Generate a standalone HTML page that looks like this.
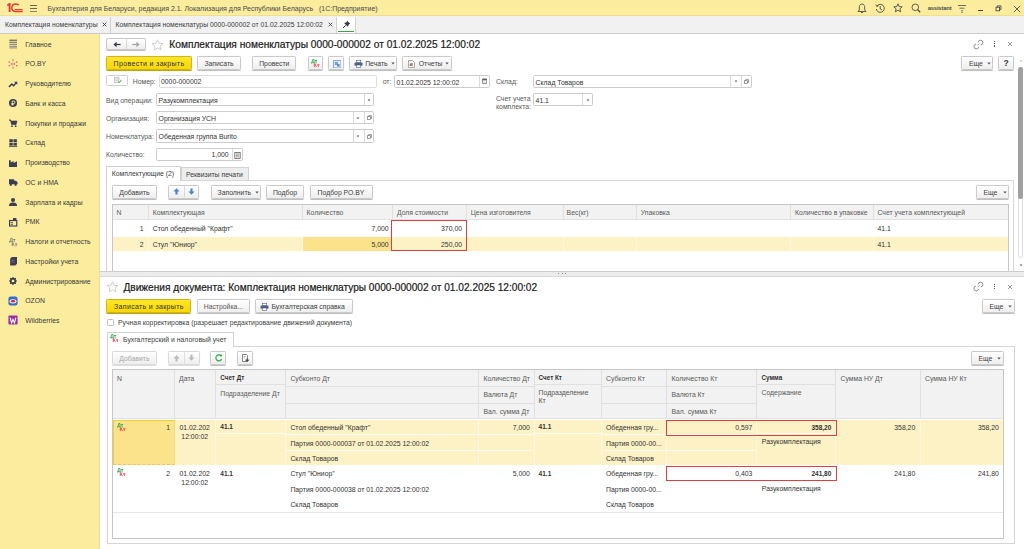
<!DOCTYPE html>
<html><head><meta charset="utf-8"><style>
*{box-sizing:border-box;margin:0;padding:0}
html,body{width:1024px;height:549px;overflow:hidden;background:#fff;font-family:"Liberation Sans",sans-serif;font-size:6.85px;color:#404040}
.a{position:absolute}
.t{position:absolute;white-space:nowrap;line-height:9px}
.mi{position:absolute;left:25.3px;white-space:nowrap;color:#3a3a3a;line-height:9px}
.btn{position:absolute;background:linear-gradient(#FFFFFF,#EEEEEE);border:1px solid #CACACA;border-radius:1.5px;box-shadow:0 0.7px 0.7px #BDBDBD;color:#404040;text-align:center;line-height:11px;white-space:nowrap}
.ybtn{position:absolute;background:linear-gradient(#FFE628,#F8D800);border:1px solid #CDB22A;border-radius:1.5px;box-shadow:0 0.7px 0.7px #B9A000;color:#30303e;font-size:7px;letter-spacing:0.34px;text-align:center;line-height:11px;white-space:nowrap}
.inp{position:absolute;background:#fff;border:1px solid #CCCCCC;border-radius:1.5px;padding-left:3px;color:#333;white-space:nowrap}
.lbl{position:absolute;color:#595959;white-space:nowrap;line-height:9px}
.sep{position:absolute;top:0;bottom:0;width:1px;background:#DADADA}
.red{position:absolute;border:1.4px solid #E33C40}
</style></head>
<body>
<div class="a" style="left:0px;top:0px;width:1024.00px;height:16.00px;background:#FBEC9E;border-bottom:1px solid #EEDF95"></div>
<svg class="a" style="left:7px;top:3px" width="17" height="10" viewBox="0 0 17 10">
 <path d="M0.3 2.6 L2.6 0.9 L2.6 9" stroke="#E53935" stroke-width="1.9" fill="none"/>
 <path d="M11.8 2.3 C10.5 0.5 5.8 0.3 5 3.6 C4.3 6.3 5.6 8.5 8.6 8.5 L15.6 8.5" stroke="#E53935" stroke-width="1.5" fill="none"/>
 <path d="M7.6 6.6 L15.6 6.6" stroke="#E53935" stroke-width="1.1" fill="none"/>
</svg>
<div class="a" style="left:30px;top:5px;width:7.00px;height:1.00px;background:#6b6553;"></div>
<div class="a" style="left:30px;top:8px;width:7.00px;height:1.00px;background:#6b6553;"></div>
<div class="a" style="left:30px;top:10.5px;width:7.00px;height:1.00px;background:#8a8468;"></div>
<div class="t" style="left:47.5px;top:3.5px;color:#4a4a4a;font-size:7px">Бухгалтерия для Беларуси, редакция 2.1. Локализация для Республики Беларусь&nbsp;&nbsp;&nbsp;(1С:Предприятие)</div>
<svg class="a" style="left:857px;top:3px" width="10" height="11" viewBox="0 0 10 11"><path d="M5 1 C2.8 1 2.3 3 2.3 5 L2.3 7 L1 8.5 L9 8.5 L7.7 7 L7.7 5 C7.7 3 7.2 1 5 1 Z M4 9.5 L6 9.5" stroke="#444" stroke-width="0.85" fill="none"/></svg>
<svg class="a" style="left:875px;top:3px" width="10" height="11" viewBox="0 0 10 11"><path d="M2 3 A4 4 0 1 1 1.3 6" stroke="#444" stroke-width="0.85" fill="none"/><path d="M0.8 1.5 L1.8 3.5 L3.6 2.6" stroke="#444" stroke-width="0.85" fill="none"/><path d="M5.2 3 L5.2 6 L7 7" stroke="#444" stroke-width="0.85" fill="none"/></svg>
<svg class="a" style="left:893px;top:3px" width="10" height="10" viewBox="0 0 10 10"><path d="M5 0.8 L6.2 3.6 L9.2 3.8 L6.9 5.8 L7.6 8.8 L5 7.2 L2.4 8.8 L3.1 5.8 L0.8 3.8 L3.8 3.6 Z" stroke="#444" stroke-width="0.85" fill="none" stroke-linejoin="round"/></svg>
<svg class="a" style="left:911px;top:3px" width="10" height="10" viewBox="0 0 10 10"><circle cx="4.3" cy="4.3" r="3.3" stroke="#444" stroke-width="0.85" fill="none"/><path d="M6.6 6.6 L9.2 9.2" stroke="#444" stroke-width="1.3"/></svg>
<div class="t" style="left:927.7px;top:3.5px;color:#4a4a4a;font-size:5.8px;font-weight:bold;letter-spacing:-0.15px">assistant</div>
<svg class="a" style="left:957px;top:3px" width="10" height="11" viewBox="0 0 10 11"><path d="M1 2.5 L9 2.5 M2.5 5.2 L7.5 5.2 M4 7.8 L6 7.8" stroke="#555" stroke-width="0.85"/><path d="M4.5 9.5 L5.5 9.5" stroke="#555" stroke-width="1"/></svg>
<div class="a" style="left:977.5px;top:9.8px;width:5.50px;height:1.00px;background:#444;"></div>
<svg class="a" style="left:995px;top:5px" width="7" height="7" viewBox="0 0 7 7"><rect x="1" y="2.2" width="3.6" height="3.6" stroke="#444" stroke-width="0.85" fill="none"/><path d="M2.4 2.2 L2.4 0.9 L6 0.9 L6 4.4 L4.6 4.4" stroke="#444" stroke-width="0.85" fill="none"/></svg>
<svg class="a" style="left:1012.5px;top:4.5px" width="8" height="8" viewBox="0 0 8 8"><path d="M0.8 0.8 L7.2 7.2 M7.2 0.8 L0.8 7.2" stroke="#444" stroke-width="0.85"/></svg>
<div class="a" style="left:0px;top:16px;width:1024.00px;height:17.50px;background:#F1F1F1;border-bottom:1px solid #CACACA"></div>
<div class="t" style="left:5px;top:20.1px;color:#404040;font-size:6.8px">Комплектация номенклатуры</div>
<svg class="a" style="left:101.5px;top:22.3px" width="5" height="5" viewBox="0 0 5 5"><path d="M0.7 0.7 L4.3 4.3 M4.3 0.7 L0.7 4.3" stroke="#444" stroke-width="0.95"/></svg>
<div class="a" style="left:110px;top:17px;width:1.00px;height:16.00px;background:#D2D2D2;"></div>
<div class="t" style="left:115.5px;top:20.1px;color:#404040;font-size:6.8px">Комплектация номенклатуры 0000-000002 от 01.02.2025 12:00:02</div>
<svg class="a" style="left:327.5px;top:22.3px" width="5" height="5" viewBox="0 0 5 5"><path d="M0.7 0.7 L4.3 4.3 M4.3 0.7 L0.7 4.3" stroke="#444" stroke-width="0.95"/></svg>
<div class="a" style="left:335.5px;top:16.5px;width:20.00px;height:16.50px;background:#fff;border-left:1px solid #D2D2D2;border-right:1px solid #D2D2D2"></div>
<svg class="a" style="left:341.5px;top:19.5px" width="9" height="9" viewBox="0 0 9 9"><path d="M5.2 0.8 L8.2 3.8 L7 4.3 L5.8 6.8 L2.2 3.2 L4.7 2 Z" fill="#3a3a4a"/><path d="M3.6 5.4 L1 8" stroke="#3a3a4a" stroke-width="1"/></svg>
<div class="a" style="left:338px;top:31px;width:16.00px;height:1.20px;background:#3BA546;"></div>
<div class="a" style="left:0px;top:33.5px;width:100.00px;height:515.50px;background:#FBEC9E;"></div>
<div class="a" style="left:99px;top:33.5px;width:1.00px;height:515.50px;background:#E9DDA0;"></div>
<svg class="a" style="left:8.9px;top:40.2px;overflow:visible" width="8" height="8" viewBox="0 0 7 7"><path d="M0.3 0.2H7" stroke="#3d3d5a" stroke-width="0.8"/><path d="M0.3 2H7" stroke="#55556a" stroke-width="0.8"/><path d="M0.3 3.8H7" stroke="#6a6a75" stroke-width="0.8"/><path d="M0.3 5.5H7" stroke="#777780" stroke-width="0.8"/><path d="M0.3 6.9H7" stroke="#808085" stroke-width="0.8"/></svg>
<div class="mi" style="top:39.7px">Главное</div>
<svg class="a" style="left:8.9px;top:59.9px;overflow:visible" width="8" height="8" viewBox="0 0 7 7"><g fill="#D84848"><circle cx="3.5" cy="0" r="0.6"/><circle cx="0.2" cy="1.8" r="0.6"/><circle cx="6.8" cy="1.8" r="0.6"/><circle cx="0.2" cy="5" r="0.6"/><circle cx="6.8" cy="5" r="0.6"/><circle cx="3.5" cy="7" r="0.6"/><circle cx="2.2" cy="3.5" r="0.55"/><circle cx="4.8" cy="3.5" r="0.55"/></g><path d="M1 2.5L6 4.5M6 2.5L1 4.5M3.5 0.8V6.2" stroke="#C89090" stroke-width="0.4"/></svg>
<div class="mi" style="top:59.4px">РО.BY</div>
<svg class="a" style="left:8.9px;top:79.7px;overflow:visible" width="8" height="8" viewBox="0 0 7 7"><path d="M0 6L2.5 3.5L4 5L6.8 2" stroke="#3d3d55" stroke-width="1.3" fill="none"/><path d="M4.5 1.5H7.2V4.2Z" fill="#3d3d55"/></svg>
<div class="mi" style="top:79.2px">Руководителю</div>
<svg class="a" style="left:8.9px;top:99.4px;overflow:visible" width="8" height="8" viewBox="0 0 7 7"><circle cx="3.5" cy="3.5" r="3.5" fill="#3d3d55"/><path d="M2.8 5.8V1.8H4.2A1.1 1.1 0 0 1 4.2 4H2.2M2.2 4.9H4.2" stroke="#FBEC9E" stroke-width="0.8" fill="none"/></svg>
<div class="mi" style="top:98.9px">Банк и касса</div>
<svg class="a" style="left:8.9px;top:119.1px;overflow:visible" width="8" height="8" viewBox="0 0 7 7"><path d="M0 0.8H1.4L2.2 4.8H6.2L7 1.8H1.7Z" fill="#3d3d55" stroke="#3d3d55" stroke-width="0.6"/><circle cx="2.6" cy="6.3" r="0.8" fill="#3d3d55"/><circle cx="5.8" cy="6.3" r="0.8" fill="#3d3d55"/></svg>
<div class="mi" style="top:118.6px">Покупки и продажи</div>
<svg class="a" style="left:8.9px;top:138.9px;overflow:visible" width="8" height="8" viewBox="0 0 7 7"><rect x="0.3" y="0.2" width="3" height="2.5" fill="#3d3d55"/><rect x="3.9" y="0.2" width="3" height="2.5" fill="#3d3d55"/><rect x="0.3" y="3.3" width="3" height="2.5" fill="#3d3d55"/><rect x="3.9" y="3.3" width="3" height="2.5" fill="#3d3d55"/><path d="M0 6.6H7.2" stroke="#3d3d55" stroke-width="0.7"/></svg>
<div class="mi" style="top:138.4px">Склад</div>
<svg class="a" style="left:8.9px;top:158.6px;overflow:visible" width="8" height="8" viewBox="0 0 7 7"><path d="M0 7V1H1.5V3L4 1.8V3.5L7 2V7Z" fill="#3d3d55"/></svg>
<div class="mi" style="top:158.1px">Производство</div>
<svg class="a" style="left:8.9px;top:178.3px;overflow:visible" width="8" height="8" viewBox="0 0 7 7"><path d="M0 1H4.5V5.5H0Z M4.5 2.5H6.2L7.5 4V5.5H4.5Z" fill="#3d3d55"/><circle cx="1.6" cy="6" r="1" fill="#3d3d55"/><circle cx="5.8" cy="6" r="1" fill="#3d3d55"/></svg>
<div class="mi" style="top:177.8px">ОС и НМА</div>
<svg class="a" style="left:8.9px;top:198.0px;overflow:visible" width="8" height="8" viewBox="0 0 7 7"><circle cx="3.5" cy="1.8" r="1.8" fill="#3d3d55"/><path d="M0 7C0 4.5 1.5 4 3.5 4S7 4.5 7 7Z" fill="#3d3d55"/></svg>
<div class="mi" style="top:197.5px">Зарплата и кадры</div>
<svg class="a" style="left:8.9px;top:217.8px;overflow:visible" width="8" height="8" viewBox="0 0 7 7"><path d="M3.5 0H6.5V2H3.5Z" fill="#3d3d55"/><rect x="0.5" y="2.2" width="6.3" height="4.8" fill="none" stroke="#3d3d55" stroke-width="1"/><path d="M1.5 4H3.5M1.5 5.5H3.5" stroke="#3d3d55" stroke-width="0.7"/></svg>
<div class="mi" style="top:217.3px">РМК</div>
<svg class="a" style="left:8.9px;top:237.5px;overflow:visible" width="8" height="8" viewBox="0 0 7 7"><path d="M0.4 3.2H3.2M0.9 3.2L1.6 0.3H2.8V3.2M0.45 2.9V3.9M3.15 2.9V3.9M3.6 1.3H5.6M4.6 1.3V3.4" stroke="#55556a" stroke-width="0.55" fill="none"/><path d="M2.8 4V7.2M2.8 5.6L4.6 4M3.5 5.1L4.8 7.2M5.2 5.1H7.2M6.2 5.1V7.2" stroke="#55556a" stroke-width="0.55" fill="none"/></svg>
<div class="mi" style="top:237.0px">Налоги и отчетность</div>
<svg class="a" style="left:8.9px;top:257.2px;overflow:visible" width="8" height="8" viewBox="0 0 7 7"><path d="M1 1.5L2.5 0H7V6L5.5 7.5H1Z" fill="#3d3d55"/><path d="M2 3H5M2 4.5H5" stroke="#8888aa" stroke-width="0.5"/></svg>
<div class="mi" style="top:256.7px">Настройки учета</div>
<svg class="a" style="left:8.9px;top:277.0px;overflow:visible" width="8" height="8" viewBox="0 0 7 7"><circle cx="3.5" cy="3.5" r="2.2" fill="none" stroke="#3d3d55" stroke-width="1.2"/><path d="M3.5 0V7M0 3.5H7M1 1L6 6M6 1L1 6" stroke="#3d3d55" stroke-width="1"/><circle cx="3.5" cy="3.5" r="1.1" fill="#FBEC9E"/></svg>
<div class="mi" style="top:276.5px">Администрирование</div>
<svg class="a" style="left:8.9px;top:296.7px;overflow:visible" width="8" height="8" viewBox="0 0 7 7"><rect x="-0.5" y="-0.5" width="8" height="8" rx="2" fill="#2F6FD0"/><ellipse cx="3.5" cy="3.8" rx="3" ry="1.9" fill="#fff"/><ellipse cx="3.5" cy="3.8" rx="2.2" ry="1.1" fill="#E02D3C"/></svg>
<div class="mi" style="top:296.2px">OZON</div>
<svg class="a" style="left:8.9px;top:316.4px;overflow:visible" width="8" height="8" viewBox="0 0 7 7"><rect x="-0.5" y="-0.5" width="8" height="8" rx="1" fill="#9B2AA5"/><path d="M1 1.5L2.2 6L3.5 3L4.8 6L6 1.5" stroke="#fff" stroke-width="1" fill="none"/></svg>
<div class="mi" style="top:315.9px">Wildberries</div>
<div class="btn" style="left:106px;top:38.2px;width:39.5px;height:12.3px;line-height:12.3px;border-radius:2px"></div>
<div class="a" style="left:126px;top:39.2px;width:1.00px;height:10.30px;background:#D8D8D8;"></div>
<svg class="a" style="left:112.5px;top:40.8px" width="8" height="7" viewBox="0 0 8 7"><path d="M7.6 3.5H3" stroke="#3a3a4a" stroke-width="1.3"/><path d="M0.4 3.5L3.6 0.8V6.2Z" fill="#3a3a4a"/></svg>
<svg class="a" style="left:131.8px;top:40.8px" width="8" height="7" viewBox="0 0 8 7"><path d="M0.2 3.5H4.8" stroke="#a5a5a5" stroke-width="1.2"/><path d="M7.6 3.5L4.4 0.8V6.2Z" fill="#a5a5a5"/></svg>
<svg class="a" style="left:151px;top:38.5px" width="13" height="12" viewBox="0 0 13 12"><path d="M6.5 0.8L8.1 4.3L11.9 4.6L9 7.1L9.9 10.9L6.5 8.9L3.1 10.9L4 7.1L1.1 4.6L4.9 4.3Z" stroke="#C8C8C8" stroke-width="0.9" fill="#fff" stroke-linejoin="round"/></svg>
<div class="t" style="left:169.3px;top:39.3px;font-size:10.2px;line-height:12px;color:#1a1a1a;-webkit-text-stroke:0.2px #1a1a1a">Комплектация номенклатуры 0000-000002 от 01.02.2025 12:00:02</div>
<svg class="a" style="left:973px;top:38.5px" width="11" height="11" viewBox="0 0 11 11"><path d="M5.11 3.39A2.4 2.4 0 1 1 7.71 5.99M5.69 7.71A2.4 2.4 0 1 1 3.09 5.11M4.5 6.3L6.3 4.5" stroke="#707070" stroke-width="0.75" fill="none"/></svg>
<div class="a" style="left:993.8px;top:41.0px;width:1.20px;height:1.20px;background:#5a5550;"></div>
<div class="a" style="left:993.8px;top:43.199999999999996px;width:1.20px;height:1.20px;background:#5a5550;"></div>
<div class="a" style="left:993.8px;top:45.4px;width:1.20px;height:1.20px;background:#5a5550;"></div>
<svg class="a" style="left:1007.3px;top:40.8px" width="6" height="6" viewBox="0 0 6 6"><path d="M1 1L5 5M5 1L1 5" stroke="#777" stroke-width="0.75"/></svg>
<div class="ybtn" style="left:106px;top:56.3px;width:86.0px;height:13.3px;line-height:13.3px;">Провести и закрыть</div>
<div class="btn" style="left:197px;top:56.3px;width:44.0px;height:13.3px;line-height:13.3px;">Записать</div>
<div class="btn" style="left:252.3px;top:56.3px;width:44.0px;height:13.3px;line-height:13.3px;">Провести</div>
<div class="btn" style="left:307.5px;top:56.3px;width:15.8px;height:13.3px;line-height:13.3px;"></div>
<svg class="a" style="left:310.6px;top:58.7px" width="10" height="9" viewBox="0 0 10 9"><path d="M0.4 3.7H3.4M1 3.7L1.7 0.5H3V3.7M0.45 3.4V4.5M3.35 3.4V4.5M3.9 1.5H6.1M5 1.5V3.9" stroke="#35A84E" stroke-width="0.85" fill="none"/><path d="M3.3 4.4V8.1M3.3 6.3L5.4 4.4M4.1 5.8L5.6 8.1M6.1 5.8H8.5M7.3 5.8V8.1" stroke="#EA4040" stroke-width="0.85" fill="none"/></svg>
<div class="btn" style="left:328.4px;top:56.3px;width:15.4px;height:13.3px;line-height:13.3px;"><svg style="position:absolute;left:3.3px;top:2.3px" width="8.5" height="8.5" viewBox="0 0 8 8"><rect x="0.5" y="0.5" width="7" height="7" fill="#E8F0FA" stroke="#80A8D8" stroke-width="0.9"/><rect x="2" y="2" width="2.5" height="2.5" fill="#7DA6D8" stroke="#5B8FCC" stroke-width="0.5"/><rect x="3.8" y="3.8" width="2.4" height="2.4" fill="#5B8FCC"/></svg></div>
<div class="btn" style="left:349.2px;top:56.3px;width:48.1px;height:13.3px;line-height:13.3px;"><svg style="position:absolute;left:3.5px;top:2.5px" width="9" height="8" viewBox="0 0 9 8"><rect x="2.3" y="0.6" width="4.4" height="2" fill="#fff" stroke="#4f5f85" stroke-width="0.6"/><rect x="0.5" y="2.6" width="8" height="3.2" rx="0.8" fill="#4f5f85"/><rect x="2.3" y="5" width="4.4" height="2.5" fill="#fff" stroke="#4f5f85" stroke-width="0.6"/></svg><span style="position:absolute;left:15px;top:0">Печать</span><svg width="4" height="3" style="position:absolute;left:41px;top:5px" viewBox="0 0 4 3"><path d="M0.3 0.5H3.7L2 2.4Z" fill="#555"/></svg></div>
<div class="btn" style="left:402.3px;top:56.3px;width:49.3px;height:13.3px;line-height:13.3px;"><svg style="position:absolute;left:4.5px;top:2.5px" width="7" height="8" viewBox="0 0 7 8"><path d="M0.5 0.5H4.5L6.5 2.5V7.5H0.5Z" fill="#fff" stroke="#888" stroke-width="0.7"/><rect x="1.7" y="3.5" width="1.3" height="2.5" fill="#3BA546"/><rect x="3.3" y="3" width="1.3" height="3" fill="#E53935"/></svg><span style="position:absolute;left:15.5px;top:0">Отчеты</span><svg width="4" height="3" style="position:absolute;left:42px;top:5px" viewBox="0 0 4 3"><path d="M0.3 0.5H3.7L2 2.4Z" fill="#555"/></svg></div>
<div class="btn" style="left:961.4px;top:56.3px;width:31.9px;height:13.3px;line-height:13.3px;"><span style="position:absolute;left:6.5px;top:0">Еще</span><svg width="4" height="3" style="position:absolute;left:25px;top:5px" viewBox="0 0 4 3"><path d="M0.3 0.5H3.7L2 2.4Z" fill="#555"/></svg></div>
<div class="btn" style="left:998.3px;top:56.3px;width:15.7px;height:13.3px;line-height:13.3px;"><b style="font-size:8.5px;color:#333">?</b></div>
<div class="a" style="left:1017px;top:56px;width:7.00px;height:215.00px;background:#fff;"></div>
<svg class="a" style="left:1019px;top:59px" width="4" height="3" viewBox="0 0 4 3"><path d="M0.5 2.5H3.5L2 0.8Z" fill="#bbb"/></svg>
<div class="a" style="left:1018.2px;top:66.9px;width:4.60px;height:191.40px;background:#fff;border:0.8px solid #DDDDDD;border-radius:2.3px"></div>
<div class="a" style="left:1018.2px;top:66.9px;width:4.60px;height:132.20px;background:#A0A0A0;border-radius:2.3px"></div>
<svg class="a" style="left:1019px;top:263.5px" width="4" height="3" viewBox="0 0 4 3"><path d="M0.5 0.5H3.5L2 2.2Z" fill="#666"/></svg>
<div class="btn" style="left:106px;top:75.2px;width:21.7px;height:10.4px;line-height:10.4px;background:#fff;box-shadow:none;border-color:#CFCFCF"><svg style="position:absolute;left:7px;top:1.3px" width="8" height="7" viewBox="0 0 8 7"><rect x="0.5" y="0.5" width="4.5" height="5" fill="#F2F2F2" stroke="#A8A8A8" stroke-width="0.6"/><path d="M1.5 2H4M1.5 3.5H4" stroke="#aaa" stroke-width="0.5"/><path d="M4.3 4.3L5.5 5.6L7.5 2.8" stroke="#3BA546" stroke-width="1" fill="none"/></svg></div>
<div class="lbl" style="left:132.8px;top:77.3px">Номер:</div>
<div class="inp" style="border-color:#DDDDDD;left:158.7px;top:75.4px;width:218.0px;height:12.9px;line-height:12.9px;padding-left:1.3px">0000-000002</div>
<div class="lbl" style="left:382.7px;top:77.3px">от:</div>
<div class="inp" style="left:394.3px;top:75.2px;width:96.2px;height:13.2px;line-height:13.2px;padding-left:1.3px">01.02.2025 12:00:02<div class="sep" style="left:84.1px"></div></div>
<svg class="a" style="left:482px;top:78px" width="5.2" height="6" viewBox="0 0 5.2 6"><rect x="0.4" y="0.9" width="4.4" height="4.7" rx="0.6" fill="#E6E6E6" stroke="#707070" stroke-width="0.8"/><rect x="0.4" y="0.9" width="4.4" height="1.3" fill="#5a5a6a"/></svg>
<div class="lbl" style="left:496.1px;top:77.3px">Склад:</div>
<div class="inp" style="left:533.3px;top:75.2px;width:219.2px;height:13.2px;line-height:13.2px;padding-left:1.3px">Склад Товаров<div class="sep" style="left:195.3px"></div><div class="sep" style="left:207.1px"></div></div>
<svg class="a" style="left:733.5px;top:80.3px" width="4" height="3" viewBox="0 0 4 3"><path d="M0.6 0.6H3.4L2 2.2Z" fill="#555"/></svg>
<svg class="a" style="left:744.4px;top:79.2px" width="5.2" height="5.2" viewBox="0 0 6 6"><rect x="0.7" y="2" width="3.3" height="3.3" fill="none" stroke="#666" stroke-width="0.75"/><path d="M2 2V0.7H5.3V4H4" stroke="#666" stroke-width="0.75" fill="none"/></svg>
<div class="lbl" style="left:106px;top:95.5px">Вид операции:</div>
<div class="inp" style="left:156.3px;top:93.1px;width:218.2px;height:13.2px;line-height:13.2px;padding-left:1.3px">Разукомплектация<div class="sep" style="left:206.4px"></div></div>
<svg class="a" style="left:367.1px;top:98.5px" width="4" height="3" viewBox="0 0 4 3"><path d="M0.6 0.6H3.4L2 2.2Z" fill="#555"/></svg>
<div class="lbl" style="left:496px;top:94.5px;line-height:8.8px">Счет учета<br>комплекта:</div>
<div class="inp" style="left:533.3px;top:93.1px;width:60.1px;height:13.2px;line-height:13.2px;padding-left:1.3px">41.1<div class="sep" style="left:47.4px"></div></div>
<svg class="a" style="left:585.5px;top:98.5px" width="4" height="3" viewBox="0 0 4 3"><path d="M0.6 0.6H3.4L2 2.2Z" fill="#555"/></svg>
<div class="lbl" style="left:106px;top:113.5px">Организация:</div>
<div class="inp" style="left:156.3px;top:111.2px;width:218.2px;height:13.2px;line-height:13.2px;padding-left:1.3px">Организация УСН<div class="sep" style="left:195.3px"></div><div class="sep" style="left:206.4px"></div></div>
<svg class="a" style="left:356.1px;top:116.5px" width="4" height="3" viewBox="0 0 4 3"><path d="M0.6 0.6H3.4L2 2.2Z" fill="#555"/></svg>
<svg class="a" style="left:366.5px;top:115.4px" width="5.2" height="5.2" viewBox="0 0 6 6"><rect x="0.7" y="2" width="3.3" height="3.3" fill="none" stroke="#666" stroke-width="0.75"/><path d="M2 2V0.7H5.3V4H4" stroke="#666" stroke-width="0.75" fill="none"/></svg>
<div class="lbl" style="left:106px;top:132.0px">Номенклатура:</div>
<div class="inp" style="left:156.3px;top:129.4px;width:218.2px;height:13.2px;line-height:13.2px;padding-left:1.3px">Обеденная группа Burito<div class="sep" style="left:195.3px"></div><div class="sep" style="left:206.4px"></div></div>
<svg class="a" style="left:356.1px;top:134.9px" width="4" height="3" viewBox="0 0 4 3"><path d="M0.6 0.6H3.4L2 2.2Z" fill="#555"/></svg>
<svg class="a" style="left:366.5px;top:133.8px" width="5.2" height="5.2" viewBox="0 0 6 6"><rect x="0.7" y="2" width="3.3" height="3.3" fill="none" stroke="#666" stroke-width="0.75"/><path d="M2 2V0.7H5.3V4H4" stroke="#666" stroke-width="0.75" fill="none"/></svg>
<div class="lbl" style="left:106px;top:149.8px">Количество:</div>
<div class="inp" style="left:156.3px;top:147.7px;width:86.4px;height:13px;line-height:12px;text-align:right;padding-right:13px">1,000<div class="sep" style="left:74.5px"></div></div>
<svg class="a" style="left:233.8px;top:151.5px" width="7" height="7" viewBox="0 0 7 7"><rect x="0.8" y="0.5" width="5.4" height="6" fill="#eee" stroke="#666" stroke-width="0.8"/><path d="M2 2H5M2 3.4H5M2 4.8H5" stroke="#777" stroke-width="0.6"/></svg>
<div class="a" style="left:106.4px;top:180px;width:908.00px;height:91.00px;background:transparent;border:1px solid #D6D6D6;border-bottom:none"></div>
<div class="a" style="left:180.6px;top:167.3px;width:68.20px;height:13.00px;background:#EDEDED;border:1px solid #D2D2D2;border-bottom:none"></div>
<div class="t" style="left:186px;top:169.5px;color:#404040;">Реквизиты печати</div>
<div class="a" style="left:106.4px;top:165.9px;width:74.70px;height:15.10px;background:#fff;border:1px solid #D2D2D2;border-bottom:none"></div>
<div class="t" style="left:111.7px;top:169.1px;color:#404040;">Комплектующие (2)</div>
<div class="btn" style="left:112.2px;top:185.2px;width:44.4px;height:13.4px;line-height:13.4px;">Добавить</div>
<div class="btn" style="left:167.5px;top:185.2px;width:31.9px;height:13.4px;line-height:13.4px;"><div style="position:absolute;left:15px;top:0;width:1px;height:11px;background:#D8D8D8"></div><svg style="position:absolute;left:4.3px;top:2.3px" width="7" height="7" viewBox="0 0 7 7"><path d="M3.5 0.3L6.6 3.4H4.6V6.5H2.4V3.4H0.4Z" fill="#4A86C8"/></svg><svg style="position:absolute;left:19.8px;top:2px" width="7" height="7" viewBox="0 0 7 7"><path d="M3.5 6.7L6.6 3.6H4.6V0.5H2.4V3.6H0.4Z" fill="#4A86C8"/></svg></div>
<div class="btn" style="left:210.5px;top:185.2px;width:50.1px;height:13.4px;line-height:13.4px;"><span style="position:absolute;left:6px;top:0">Заполнить</span><svg width="4" height="3" style="position:absolute;left:43px;top:5px" viewBox="0 0 4 3"><path d="M0.3 0.5H3.7L2 2.4Z" fill="#555"/></svg></div>
<div class="btn" style="left:265.8px;top:185.2px;width:38.4px;height:13.4px;line-height:13.4px;">Подбор</div>
<div class="btn" style="left:309.5px;top:185.2px;width:63.0px;height:13.4px;line-height:13.4px;">Подбор РО.BY</div>
<div class="btn" style="left:976px;top:185.2px;width:32.6px;height:13.4px;line-height:13.4px;"><span style="position:absolute;left:6.5px;top:0">Еще</span><svg width="4" height="3" style="position:absolute;left:25.5px;top:5px" viewBox="0 0 4 3"><path d="M0.3 0.5H3.7L2 2.4Z" fill="#555"/></svg></div>
<div class="a" style="left:112.2px;top:204.2px;width:896.60px;height:70.00px;background:#fff;border:1px solid #C6C6C6"></div>
<div class="a" style="left:113.2px;top:205.2px;width:894.60px;height:15.30px;background:#F2F2F2;border-bottom:1px solid #E2E2E2"></div>
<div class="a" style="left:148.0px;top:205.2px;width:1.00px;height:15.30px;background:#E0E0E0;"></div>
<div class="a" style="left:302.3px;top:205.2px;width:1.00px;height:15.30px;background:#E0E0E0;"></div>
<div class="a" style="left:391.8px;top:205.2px;width:1.00px;height:15.30px;background:#E0E0E0;"></div>
<div class="a" style="left:465.9px;top:205.2px;width:1.00px;height:15.30px;background:#E0E0E0;"></div>
<div class="a" style="left:562.6px;top:205.2px;width:1.00px;height:15.30px;background:#E0E0E0;"></div>
<div class="a" style="left:635.9px;top:205.2px;width:1.00px;height:15.30px;background:#E0E0E0;"></div>
<div class="a" style="left:790.0px;top:205.2px;width:1.00px;height:15.30px;background:#E0E0E0;"></div>
<div class="a" style="left:872.5px;top:205.2px;width:1.00px;height:15.30px;background:#E0E0E0;"></div>
<div class="a" style="left:113.2px;top:237px;width:894.60px;height:14.00px;background:#FDF1C6;"></div>
<div class="a" style="left:302.8px;top:237px;width:89.50px;height:14.00px;background:#FBE38C;"></div>
<div class="a" style="left:148.0px;top:237px;width:1.00px;height:14.00px;background:#FEF7DE;"></div>
<div class="a" style="left:302.3px;top:237px;width:1.00px;height:14.00px;background:#FEF7DE;"></div>
<div class="a" style="left:391.8px;top:237px;width:1.00px;height:14.00px;background:#FEF7DE;"></div>
<div class="a" style="left:465.9px;top:237px;width:1.00px;height:14.00px;background:#FEF7DE;"></div>
<div class="a" style="left:562.6px;top:237px;width:1.00px;height:14.00px;background:#FEF7DE;"></div>
<div class="a" style="left:635.9px;top:237px;width:1.00px;height:14.00px;background:#FEF7DE;"></div>
<div class="a" style="left:790.0px;top:237px;width:1.00px;height:14.00px;background:#FEF7DE;"></div>
<div class="a" style="left:872.5px;top:237px;width:1.00px;height:14.00px;background:#FEF7DE;"></div>
<div class="t" style="left:116.6px;top:207.6px;color:#5a5a5a;">N</div>
<div class="t" style="left:152.7px;top:207.6px;color:#5a5a5a;">Комплектующая</div>
<div class="t" style="left:306.6px;top:207.6px;color:#5a5a5a;">Количество</div>
<div class="t" style="left:397px;top:207.6px;color:#5a5a5a;">Доля стоимости</div>
<div class="t" style="left:470.8px;top:207.6px;color:#5a5a5a;">Цена изготовителя</div>
<div class="t" style="left:566.6px;top:207.6px;color:#5a5a5a;">Вес(кг)</div>
<div class="t" style="left:640.8px;top:207.6px;color:#5a5a5a;">Упаковка</div>
<div class="t" style="left:795px;top:207.6px;color:#5a5a5a;">Количество в упаковке</div>
<div class="t" style="left:877.5px;top:207.6px;color:#5a5a5a;">Счет учета комплектующей</div>
<div class="t" style="right:880.5px;top:224.0px;color:#333;">1</div>
<div class="t" style="left:152.7px;top:224.0px;color:#333;">Стол обеденный "Крафт"</div>
<div class="t" style="right:635.4px;top:224.0px;color:#333;">7,000</div>
<div class="t" style="right:562.0px;top:224.0px;color:#333;">370,00</div>
<div class="t" style="left:877.5px;top:224.0px;color:#333;">41.1</div>
<div class="t" style="right:880.5px;top:239.7px;color:#333;">2</div>
<div class="t" style="left:152.7px;top:239.7px;color:#333;">Стул "Юниор"</div>
<div class="t" style="right:635.4px;top:239.7px;color:#333;">5,000</div>
<div class="t" style="right:562.0px;top:239.7px;color:#333;">250,00</div>
<div class="t" style="left:877.5px;top:239.7px;color:#333;">41.1</div>
<div class="red" style="left:391.1px;top:219.9px;width:75.9px;height:30.8px"></div>
<div class="a" style="left:100px;top:270.8px;width:924.00px;height:6.20px;background:#ECECEC;border-top:1px solid #CCCCCC;border-bottom:1px solid #D8D8D8"></div>
<div class="a" style="left:558px;top:273.2px;width:1.00px;height:1.20px;background:#888;"></div>
<div class="a" style="left:561.5px;top:273.2px;width:1.00px;height:1.20px;background:#888;"></div>
<div class="a" style="left:565px;top:273.2px;width:1.00px;height:1.20px;background:#888;"></div>
<svg class="a" style="left:106px;top:281.2px" width="13" height="12" viewBox="0 0 13 12"><path d="M6.5 0.8L8.1 4.3L11.9 4.6L9 7.1L9.9 10.9L6.5 8.9L3.1 10.9L4 7.1L1.1 4.6L4.9 4.3Z" stroke="#C8C8C8" stroke-width="0.9" fill="#fff" stroke-linejoin="round"/></svg>
<div class="t" style="left:123.4px;top:281.7px;font-size:10.14px;line-height:12px;color:#1a1a1a;-webkit-text-stroke:0.2px #1a1a1a">Движения документа: Комплектация номенклатуры 0000-000002 от 01.02.2025 12:00:02</div>
<svg class="a" style="left:973px;top:281.3px" width="11" height="11" viewBox="0 0 11 11"><path d="M5.11 3.39A2.4 2.4 0 1 1 7.71 5.99M5.69 7.71A2.4 2.4 0 1 1 3.09 5.11M4.5 6.3L6.3 4.5" stroke="#707070" stroke-width="0.75" fill="none"/></svg>
<div class="a" style="left:993.8px;top:283.8px;width:1.20px;height:1.20px;background:#5a5550;"></div>
<div class="a" style="left:993.8px;top:286.0px;width:1.20px;height:1.20px;background:#5a5550;"></div>
<div class="a" style="left:993.8px;top:288.20000000000005px;width:1.20px;height:1.20px;background:#5a5550;"></div>
<svg class="a" style="left:1007.3px;top:283.6px" width="6" height="6" viewBox="0 0 6 6"><path d="M1 1L5 5M5 1L1 5" stroke="#777" stroke-width="0.75"/></svg>
<div class="ybtn" style="left:106.3px;top:299.1px;width:85.1px;height:13.5px;line-height:13.5px;">Записать и закрыть</div>
<div class="btn" style="left:196.5px;top:299.1px;width:53.8px;height:13.5px;line-height:13.5px;"><span style="color:#5a5a5a">Настройка...</span></div>
<div class="btn" style="left:255.4px;top:299.1px;width:98.0px;height:13.5px;line-height:13.5px;"><svg style="position:absolute;left:4px;top:2.5px" width="9" height="8" viewBox="0 0 9 8"><rect x="2.3" y="0.6" width="4.4" height="2" fill="#fff" stroke="#4f5f85" stroke-width="0.6"/><rect x="0.5" y="2.6" width="8" height="3.2" rx="0.8" fill="#4f5f85"/><rect x="2.3" y="5" width="4.4" height="2.5" fill="#fff" stroke="#4f5f85" stroke-width="0.6"/></svg><span style="position:absolute;left:15px;top:0">Бухгалтерская справка</span></div>
<div class="btn" style="left:982px;top:299.1px;width:32.5px;height:13.5px;line-height:13.5px;"><span style="position:absolute;left:6.5px;top:0">Еще</span><svg width="4" height="3" style="position:absolute;left:25px;top:5px" viewBox="0 0 4 3"><path d="M0.3 0.5H3.7L2 2.4Z" fill="#555"/></svg></div>
<div class="a" style="left:106.6px;top:318.9px;width:7.90px;height:7.60px;background:#fff;border:1px solid #BDBDBD;border-radius:1.5px"></div>
<div class="t" style="left:118px;top:318.0px;color:#404040;">Ручная корректировка (разрешает редактирование движений документа)</div>
<div class="a" style="left:106.6px;top:346.3px;width:908.00px;height:197.40px;background:transparent;border:1px solid #D6D6D6"></div>
<div class="a" style="left:106.6px;top:332.3px;width:127.00px;height:15.00px;background:#fff;border:1px solid #D2D2D2;border-bottom:none"></div>
<svg class="a" style="left:110px;top:334.3px" width="10" height="9" viewBox="0 0 10 9"><path d="M0.4 3.7H3.4M1 3.7L1.7 0.5H3V3.7M0.45 3.4V4.5M3.35 3.4V4.5M3.9 1.5H6.1M5 1.5V3.9" stroke="#35A84E" stroke-width="0.85" fill="none"/><path d="M3.3 4.4V8.1M3.3 6.3L5.4 4.4M4.1 5.8L5.6 8.1M6.1 5.8H8.5M7.3 5.8V8.1" stroke="#EA4040" stroke-width="0.85" fill="none"/></svg>
<div class="t" style="left:123.1px;top:334.7px;color:#404040;">Бухгалтерский и налоговый учет</div>
<div class="btn" style="left:112.2px;top:351.4px;width:44.4px;height:13.3px;line-height:13.3px;box-shadow:0 0.7px 0.7px #DDD;border-color:#DADADA"><span style="color:#A8A8A8">Добавить</span></div>
<div class="btn" style="left:167.5px;top:351.4px;width:32.0px;height:13.3px;line-height:13.3px;box-shadow:0 0.7px 0.7px #DDD;border-color:#DADADA"><div style="position:absolute;left:15px;top:0;width:1px;height:11.3px;background:#E0E0E0"></div><svg style="position:absolute;left:4.3px;top:2.3px" width="7" height="7" viewBox="0 0 7 7"><path d="M3.5 0.3L6.6 3.4H4.6V6.5H2.4V3.4H0.4Z" fill="#BBBBBB"/></svg><svg style="position:absolute;left:19.8px;top:2px" width="7" height="7" viewBox="0 0 7 7"><path d="M3.5 6.7L6.6 3.6H4.6V0.5H2.4V3.6H0.4Z" fill="#BBBBBB"/></svg></div>
<div class="btn" style="left:210.2px;top:351.4px;width:16.1px;height:13.3px;line-height:13.3px;"><svg style="position:absolute;left:3.5px;top:2px" width="8" height="8" viewBox="0 0 8 8"><path d="M6 1.8A3 3 0 1 0 6.6 5" stroke="#22A540" stroke-width="1.1" fill="none"/><circle cx="6.2" cy="1.6" r="1" fill="#22A540"/></svg></div>
<div class="btn" style="left:237px;top:351.4px;width:15.7px;height:13.3px;line-height:13.3px;"><svg style="position:absolute;left:3.5px;top:2px" width="8" height="8" viewBox="0 0 8 8"><path d="M0.5 0.5H4.5L5.5 1.5V7.5H0.5Z" fill="#fff" stroke="#555" stroke-width="0.7"/><path d="M1.5 2.5H3.5M1.5 4H3" stroke="#777" stroke-width="0.5"/><path d="M5 4.5V7.8M3.3 6.2H7" stroke="#333" stroke-width="0.9"/></svg></div>
<div class="btn" style="left:971px;top:351.4px;width:32.5px;height:13.3px;line-height:13.3px;"><span style="position:absolute;left:6.5px;top:0">Еще</span><svg width="4" height="3" style="position:absolute;left:25px;top:5px" viewBox="0 0 4 3"><path d="M0.3 0.5H3.7L2 2.4Z" fill="#555"/></svg></div>
<div class="a" style="left:112.3px;top:369.3px;width:891.50px;height:169.50px;background:#fff;border:1px solid #C6C6C6"></div>
<div class="a" style="left:113.3px;top:370.3px;width:889.50px;height:49.20px;background:#F2F2F2;border-bottom:1px solid #E2E2E2"></div>
<div class="a" style="left:113.3px;top:420.3px;width:889.50px;height:44.60px;background:#FDF1C6;"></div>
<div class="a" style="left:173.9px;top:370.3px;width:1.00px;height:49.20px;background:#E0E0E0;"></div>
<div class="a" style="left:173.9px;top:420.3px;width:1.00px;height:44.60px;background:#FEF8E2;"></div>
<div class="a" style="left:215.0px;top:370.3px;width:1.00px;height:49.20px;background:#E0E0E0;"></div>
<div class="a" style="left:215.0px;top:420.3px;width:1.00px;height:44.60px;background:#FEF8E2;"></div>
<div class="a" style="left:284.8px;top:370.3px;width:1.00px;height:49.20px;background:#E0E0E0;"></div>
<div class="a" style="left:284.8px;top:420.3px;width:1.00px;height:44.60px;background:#FEF8E2;"></div>
<div class="a" style="left:478.0px;top:370.3px;width:1.00px;height:49.20px;background:#E0E0E0;"></div>
<div class="a" style="left:478.0px;top:420.3px;width:1.00px;height:44.60px;background:#FEF8E2;"></div>
<div class="a" style="left:533.7px;top:370.3px;width:1.00px;height:49.20px;background:#E0E0E0;"></div>
<div class="a" style="left:533.7px;top:420.3px;width:1.00px;height:44.60px;background:#FEF8E2;"></div>
<div class="a" style="left:601.1px;top:370.3px;width:1.00px;height:49.20px;background:#E0E0E0;"></div>
<div class="a" style="left:601.1px;top:420.3px;width:1.00px;height:44.60px;background:#FEF8E2;"></div>
<div class="a" style="left:665.5px;top:370.3px;width:1.00px;height:49.20px;background:#E0E0E0;"></div>
<div class="a" style="left:665.5px;top:420.3px;width:1.00px;height:44.60px;background:#FEF8E2;"></div>
<div class="a" style="left:756.2px;top:370.3px;width:1.00px;height:49.20px;background:#E0E0E0;"></div>
<div class="a" style="left:756.2px;top:420.3px;width:1.00px;height:44.60px;background:#FEF8E2;"></div>
<div class="a" style="left:834.8px;top:370.3px;width:1.00px;height:49.20px;background:#E0E0E0;"></div>
<div class="a" style="left:834.8px;top:420.3px;width:1.00px;height:44.60px;background:#FEF8E2;"></div>
<div class="a" style="left:920.1px;top:370.3px;width:1.00px;height:49.20px;background:#E0E0E0;"></div>
<div class="a" style="left:920.1px;top:420.3px;width:1.00px;height:44.60px;background:#FEF8E2;"></div>
<div class="a" style="left:113px;top:420.3px;width:61.50px;height:44.40px;background:#FBE38C;border:1px solid #F0D030;border-bottom:1px dashed #E9C94E;border-right:1px solid #F5DC70"></div>
<div class="a" style="left:216.0px;top:383.8px;width:68.80px;height:1.00px;background:#E0E0E0;"></div>
<div class="a" style="left:534.7px;top:383.8px;width:66.40px;height:1.00px;background:#E0E0E0;"></div>
<div class="a" style="left:757.2px;top:384.1px;width:77.60px;height:1.00px;background:#E0E0E0;"></div>
<div class="a" style="left:285.8px;top:385.5px;width:247.90px;height:1.00px;background:#E0E0E0;"></div>
<div class="a" style="left:602.1px;top:385.5px;width:154.10px;height:1.00px;background:#E0E0E0;"></div>
<div class="a" style="left:285.8px;top:402.8px;width:247.90px;height:1.00px;background:#E0E0E0;"></div>
<div class="a" style="left:602.1px;top:402.8px;width:154.10px;height:1.00px;background:#E0E0E0;"></div>
<div class="a" style="left:216.0px;top:432.8px;width:68.80px;height:1.00px;background:#FFFBEE;"></div>
<div class="a" style="left:534.7px;top:432.8px;width:66.40px;height:1.00px;background:#FFFBEE;"></div>
<div class="a" style="left:757.2px;top:432.9px;width:77.60px;height:1.00px;background:#FFFBEE;"></div>
<div class="a" style="left:285.8px;top:434.4px;width:247.90px;height:1.00px;background:#FFFBEE;"></div>
<div class="a" style="left:602.1px;top:434.4px;width:154.10px;height:1.00px;background:#FFFBEE;"></div>
<div class="a" style="left:285.8px;top:449.7px;width:247.90px;height:1.00px;background:#FFFBEE;"></div>
<div class="a" style="left:602.1px;top:449.7px;width:154.10px;height:1.00px;background:#FFFBEE;"></div>
<div class="a" style="left:113.3px;top:512px;width:889.50px;height:1.00px;background:#E8E8E8;"></div>
<div class="t" style="left:117px;top:373.7px;color:#5a5a5a;">N</div>
<div class="t" style="left:179.1px;top:373.7px;color:#5a5a5a;">Дата</div>
<div class="t" style="left:220.3px;top:372.9px;color:#5a5a5a;font-weight:bold;font-size:6.3px;color:#333">Счет Дт</div>
<div class="t" style="left:220.3px;top:388.8px;color:#5a5a5a;">Подразделение Дт</div>
<div class="t" style="left:290.4px;top:373.9px;color:#5a5a5a;">Субконто Дт</div>
<div class="t" style="left:483.5px;top:373.7px;color:#5a5a5a;">Количество Дт</div>
<div class="t" style="left:483.5px;top:390.0px;color:#5a5a5a;">Валюта Дт</div>
<div class="t" style="left:483.5px;top:406.7px;color:#5a5a5a;">Вал. сумма Дт</div>
<div class="t" style="left:538.6px;top:372.9px;color:#5a5a5a;font-weight:bold;font-size:6.3px;color:#333">Счет Кт</div>
<div class="t" style="left:538.6px;top:388.7px;color:#555;line-height:8.5px">Подразделение<br>Кт</div>
<div class="t" style="left:606px;top:373.7px;color:#5a5a5a;">Субконто Кт</div>
<div class="t" style="left:671.5px;top:373.7px;color:#5a5a5a;">Количество Кт</div>
<div class="t" style="left:671.5px;top:390.0px;color:#5a5a5a;">Валюта Кт</div>
<div class="t" style="left:671.5px;top:406.7px;color:#5a5a5a;">Вал. сумма Кт</div>
<div class="t" style="left:761.5px;top:373.0px;color:#5a5a5a;font-weight:bold;font-size:6.3px;color:#333">Сумма</div>
<div class="t" style="left:761.5px;top:388.2px;color:#5a5a5a;">Содержание</div>
<div class="t" style="left:840.5px;top:373.7px;color:#5a5a5a;">Сумма НУ Дт</div>
<div class="t" style="left:925px;top:373.7px;color:#5a5a5a;">Сумма НУ Кт</div>
<svg class="a" style="left:117px;top:422.8px" width="10" height="9" viewBox="0 0 10 9"><path d="M0.4 3.7H3.4M1 3.7L1.7 0.5H3V3.7M0.45 3.4V4.5M3.35 3.4V4.5M3.9 1.5H6.1M5 1.5V3.9" stroke="#35A84E" stroke-width="0.85" fill="none"/><path d="M3.3 4.4V8.1M3.3 6.3L5.4 4.4M4.1 5.8L5.6 8.1M6.1 5.8H8.5M7.3 5.8V8.1" stroke="#EA4040" stroke-width="0.85" fill="none"/></svg>
<div class="t" style="right:853.9px;top:422.9px;color:#333;">1</div>
<div class="t" style="left:154.7px;width:80px;text-align:center;top:422.9px;color:#333;">01.02.202</div>
<div class="t" style="left:154.7px;width:80px;text-align:center;top:431.5px;color:#333;">12:00:02</div>
<div class="t" style="left:220.3px;top:422.3px;color:#333;font-weight:bold;font-size:6.5px">41.1</div>
<div class="t" style="left:290.4px;top:422.9px;color:#333;">Стол обеденный "Крафт"</div>
<div class="t" style="left:290.4px;top:438.7px;color:#333;">Партия 0000-000037 от 01.02.2025 12:00:02</div>
<div class="t" style="left:290.4px;top:454.1px;color:#333;">Склад Товаров</div>
<div class="t" style="right:494.2px;top:422.9px;color:#333;">7,000</div>
<div class="t" style="left:538.6px;top:422.3px;color:#333;font-weight:bold;font-size:6.5px">41.1</div>
<div class="t" style="left:606px;top:422.9px;color:#333;">Обеденная гру...</div>
<div class="t" style="left:606px;top:438.7px;color:#333;">Партия 0000-00...</div>
<div class="t" style="left:606px;top:454.1px;color:#333;">Склад Товаров</div>
<div class="t" style="right:271.6px;top:422.9px;color:#333;">0,597</div>
<div class="t" style="right:192.7px;top:422.6px;color:#333;font-weight:bold;font-size:6.5px">358,20</div>
<div class="t" style="left:761.8px;top:437.1px;color:#333;">Разукомплектация</div>
<div class="t" style="right:108.8px;top:422.9px;color:#333;">358,20</div>
<div class="t" style="right:25.2px;top:422.9px;color:#333;">358,20</div>
<div class="red" style="left:666.4px;top:420.2px;width:170.6px;height:16px"></div>
<svg class="a" style="left:117px;top:468.0px" width="10" height="9" viewBox="0 0 10 9"><path d="M0.4 3.7H3.4M1 3.7L1.7 0.5H3V3.7M0.45 3.4V4.5M3.35 3.4V4.5M3.9 1.5H6.1M5 1.5V3.9" stroke="#35A84E" stroke-width="0.85" fill="none"/><path d="M3.3 4.4V8.1M3.3 6.3L5.4 4.4M4.1 5.8L5.6 8.1M6.1 5.8H8.5M7.3 5.8V8.1" stroke="#EA4040" stroke-width="0.85" fill="none"/></svg>
<div class="t" style="right:853.9px;top:469.4px;color:#333;">2</div>
<div class="t" style="left:154.7px;width:80px;text-align:center;top:469.4px;color:#333;">01.02.202</div>
<div class="t" style="left:154.7px;width:80px;text-align:center;top:478.0px;color:#333;">12:00:02</div>
<div class="t" style="left:220.3px;top:468.8px;color:#333;font-weight:bold;font-size:6.5px">41.1</div>
<div class="t" style="left:290.4px;top:469.4px;color:#333;">Стул "Юниор"</div>
<div class="t" style="left:290.4px;top:484.8px;color:#333;">Партия 0000-000038 от 01.02.2025 12:00:02</div>
<div class="t" style="left:290.4px;top:500.2px;color:#333;">Склад Товаров</div>
<div class="t" style="right:494.2px;top:469.4px;color:#333;">5,000</div>
<div class="t" style="left:538.6px;top:468.8px;color:#333;font-weight:bold;font-size:6.5px">41.1</div>
<div class="t" style="left:606px;top:469.4px;color:#333;">Обеденная гру...</div>
<div class="t" style="left:606px;top:484.8px;color:#333;">Партия 0000-00...</div>
<div class="t" style="left:606px;top:500.2px;color:#333;">Склад Товаров</div>
<div class="t" style="right:271.6px;top:469.4px;color:#333;">0,403</div>
<div class="t" style="right:192.7px;top:469.1px;color:#333;font-weight:bold;font-size:6.5px">241,80</div>
<div class="t" style="left:761.8px;top:483.6px;color:#333;">Разукомплектация</div>
<div class="t" style="right:108.8px;top:469.4px;color:#333;">241,80</div>
<div class="t" style="right:25.2px;top:469.4px;color:#333;">241,80</div>
<div class="red" style="left:666.4px;top:465.8px;width:170.6px;height:15.5px"></div>
</body></html>
